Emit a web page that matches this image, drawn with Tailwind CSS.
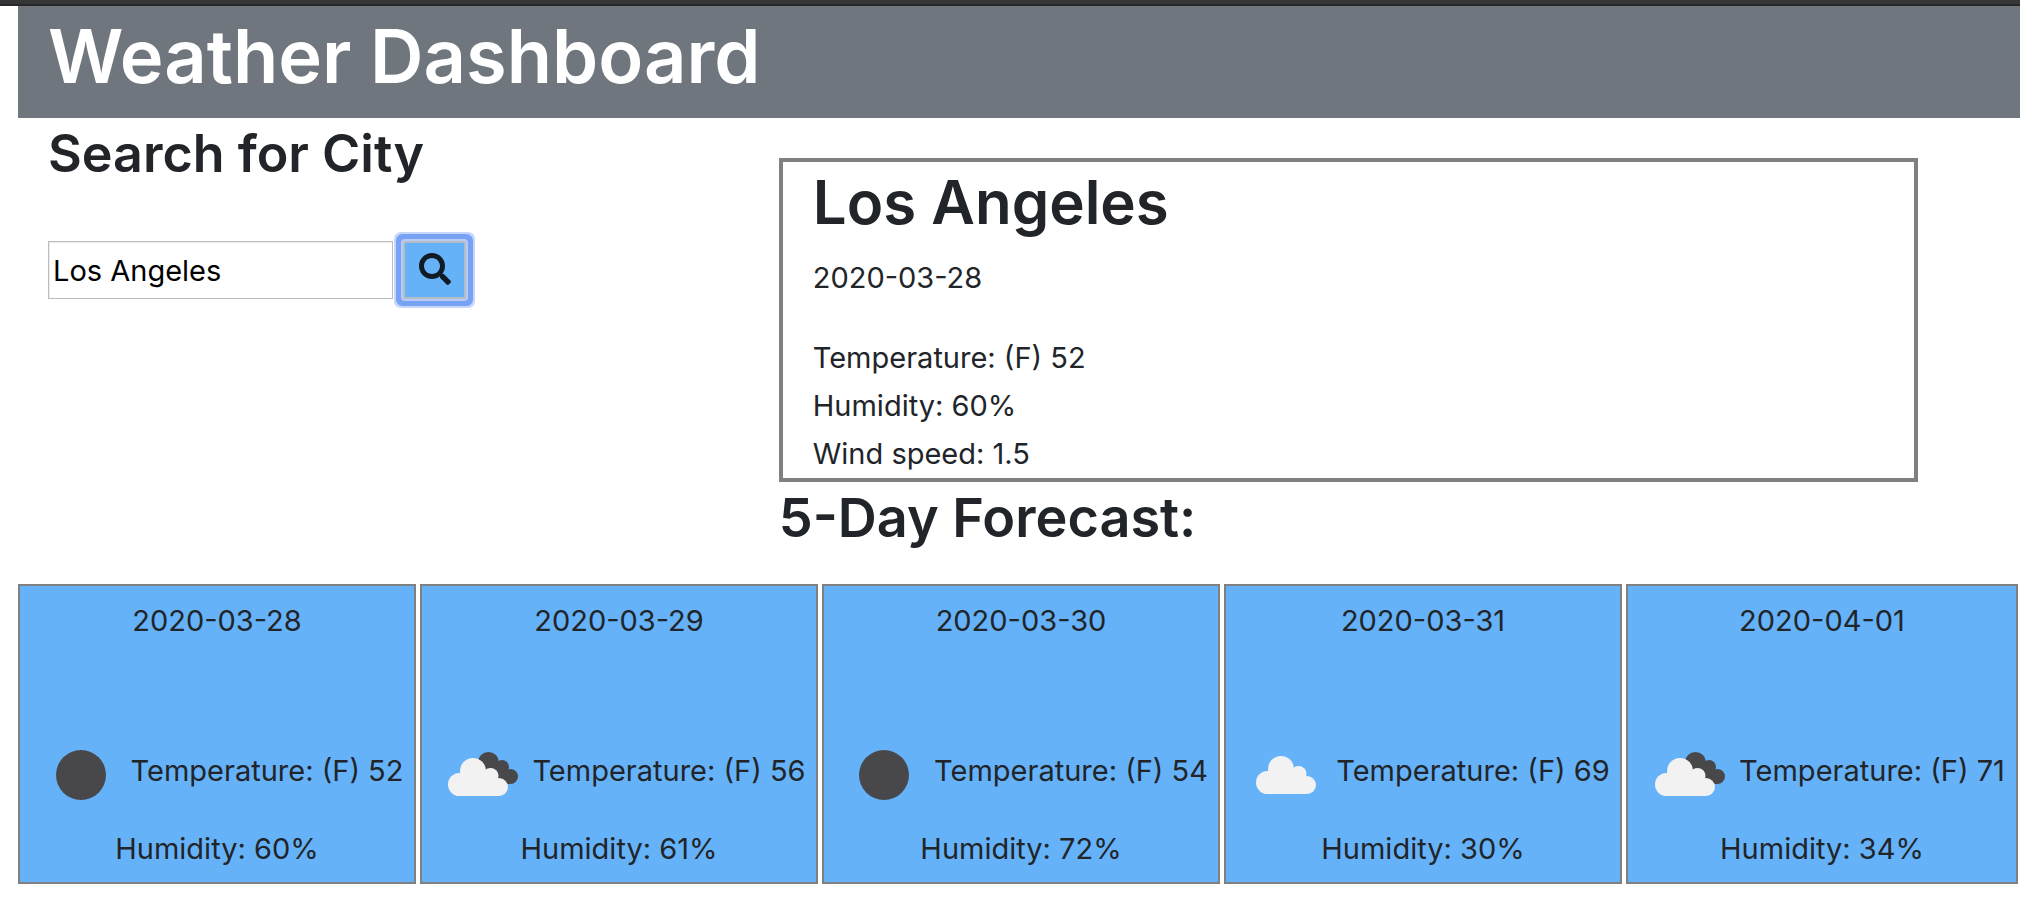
<!DOCTYPE html>
<html lang="en">
<head>
<meta charset="utf-8">
<meta name="viewport" content="width=device-width, initial-scale=1">
<title>Weather Dashboard</title>
<script src="https://cdn.jsdelivr.net/npm/@tailwindcss/browser@4"></script>
</head>
<body class="bg-white font-['Inter',sans-serif] text-[29px] leading-[48px] text-[#212529]">
<svg class="hidden" aria-hidden="true">
  <symbol id="moon" viewBox="0 0 100 100"><circle cx="50" cy="50" r="25" fill="#48484a"/></symbol>
  <symbol id="cloud" viewBox="0 0 100 100">
    <g fill="#f2f2f2"><circle cx="45" cy="44" r="13"/><circle cx="62.500" cy="49" r="8"/><circle cx="71" cy="60" r="9"/><circle cx="31.500" cy="57.500" r="11.500"/><path d="M31 48h34l6 12v9H31z"/></g>
  </symbol>
  <symbol id="clouds" viewBox="0 0 100 100">
    <g fill="#48484a"><circle cx="56.500" cy="37.500" r="10.500"/><circle cx="70" cy="42" r="7"/><circle cx="78.500" cy="51.500" r="7.500"/><path d="M52 42l18-6 8 12v11H64z"/></g>
    <use href="#cloud" x="-4" y="2" width="100" height="100"/>
  </symbol>
</svg>
<div class="h-1 bg-[#353638]"></div>
<div class="h-0.5 bg-[#28282a]"></div>
<div class="pl-[18px]">
  <header class="bg-[#6f767d] px-[30px] pt-0.5 pb-3.5 text-white">
    <h1 class="text-[74px] font-semibold leading-[96px]">Weather Dashboard</h1>
  </header>
  <main>
    <div class="grid grid-cols-[38%_1fr]">
      <section class="pl-[30px] pt-0.5">
        <h2 class="text-[52px] font-semibold leading-[68px]"><label for="city">Search for City</label></h2>
        <form class="mt-[53px] flex items-center" onsubmit="return false">
          <input id="city" type="text" value="Los Angeles" class="mr-[10px] h-[58px] w-[345px] border border-[#bdbdbd] bg-white px-1 text-[29px] text-black shadow-[inset_1px_1px_0_#ececec] outline-none">
          <button type="submit" aria-label="Search" class="flex h-[58px] w-[63px] items-center justify-center rounded-[2px] border-2 border-[#b4bcc4] bg-[#66b2f8] shadow-[0_0_0_2px_#b8cbf8,0_0_0_7px_#78a2f4,0_0_0_9px_#c6d7fa]">
            <svg class="size-8 -mt-0.5" viewBox="0 0 512 512" fill="#101b26"><path d="M505 442.700L405.300 343c-4.500-4.500-10.600-7-17-7H372c27.600-35.300 44-79.700 44-128C416 93.100 322.900 0 208 0S0 93.100 0 208s93.100 208 208 208c48.300 0 92.700-16.400 128-44v16.300c0 6.400 2.500 12.500 7 17l99.700 99.700c9.400 9.400 24.600 9.400 33.900 0l28.300-28.300c9.400-9.400 9.400-24.600.1-34zM208 336c-70.700 0-128-57.200-128-128 0-70.700 57.200-128 128-128 70.700 0 128 57.200 128 128 0 70.700-57.200 128-128 128z"/></svg>
          </button>
        </form>
      </section>
      <section class="pt-10">
        <article class="mr-[102px] border-4 border-[#808080] px-[30px] pt-0.5">
          <h2 class="text-[60px] font-semibold leading-[76px]">Los Angeles</h2>
          <p class="mt-[14px] mb-8">2020-03-28</p>
          <p>Temperature: (F) 52</p>
          <p>Humidity: 60%</p>
          <p>Wind speed: 1.5</p>
        </article>
        <h2 class="pt-0.5 text-[54px] font-semibold leading-[68px]">5-Day Forecast:</h2>
      </section>
    </div>
    <section class="mt-8 mr-0.5 grid grid-cols-[398fr_398fr_398fr_398fr_392fr] gap-1 text-center">
      <article class="flex h-[300px] flex-col border-2 border-[#808080] bg-[#66b2f8] pt-[11px] pb-[9px]">
        <p>2020-03-28</p>
        <div class="mt-auto flex items-center justify-center"><svg class="size-[100px] shrink-0"><use href="#moon"/></svg><p class="pb-2 whitespace-nowrap">Temperature: (F) 52</p></div>
        <p>Humidity: 60%</p>
      </article>
      <article class="flex h-[300px] flex-col border-2 border-[#808080] bg-[#66b2f8] pt-[11px] pb-[9px]">
        <p>2020-03-29</p>
        <div class="mt-auto flex items-center justify-center"><svg class="size-[100px] shrink-0"><use href="#clouds"/></svg><p class="pb-2 whitespace-nowrap">Temperature: (F) 56</p></div>
        <p>Humidity: 61%</p>
      </article>
      <article class="flex h-[300px] flex-col border-2 border-[#808080] bg-[#66b2f8] pt-[11px] pb-[9px]">
        <p>2020-03-30</p>
        <div class="mt-auto flex items-center justify-center"><svg class="size-[100px] shrink-0"><use href="#moon"/></svg><p class="pb-2 whitespace-nowrap">Temperature: (F) 54</p></div>
        <p>Humidity: 72%</p>
      </article>
      <article class="flex h-[300px] flex-col border-2 border-[#808080] bg-[#66b2f8] pt-[11px] pb-[9px]">
        <p>2020-03-31</p>
        <div class="mt-auto flex items-center justify-center"><svg class="size-[100px] shrink-0"><use href="#cloud"/></svg><p class="pb-2 whitespace-nowrap">Temperature: (F) 69</p></div>
        <p>Humidity: 30%</p>
      </article>
      <article class="flex h-[300px] flex-col border-2 border-[#808080] bg-[#66b2f8] pt-[11px] pb-[9px]">
        <p>2020-04-01</p>
        <div class="mt-auto flex items-center justify-center"><svg class="size-[100px] shrink-0"><use href="#clouds"/></svg><p class="pb-2 whitespace-nowrap">Temperature: (F) 71</p></div>
        <p>Humidity: 34%</p>
      </article>
    </section>
  </main>
</div>
</body>
</html>
